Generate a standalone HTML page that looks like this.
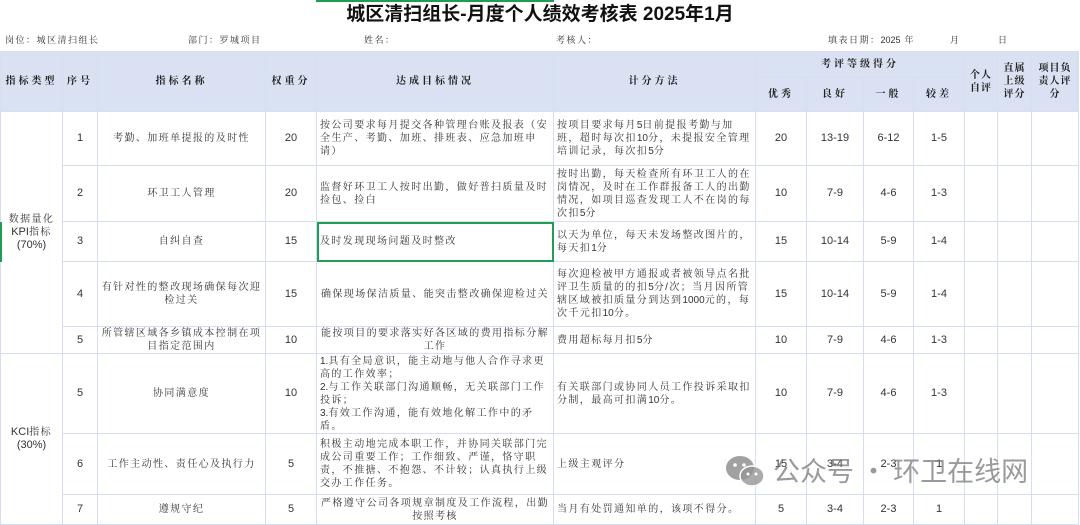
<!DOCTYPE html>
<html><head><meta charset="utf-8">
<style>
*{margin:0;padding:0;box-sizing:border-box}
body{width:1080px;height:516px;overflow:hidden;background:#fff;font-family:"Liberation Sans","Noto Serif CJK SC",serif;color:#222;position:relative}
.title{position:absolute;left:0;top:0;width:1080px;height:30px;text-align:center;font:bold 19px/30px "Liberation Sans","Noto Sans CJK SC",sans-serif;color:#111}
.info{position:absolute;top:30px;height:21px;font-size:9px;line-height:21px;color:#333;white-space:nowrap;letter-spacing:1.5px}
table{position:absolute;left:0;top:51px;border-collapse:collapse;table-layout:fixed;width:1078px}
td{border:1px solid #d5dff0;font-size:10px;line-height:13px;text-align:center;vertical-align:middle;overflow:hidden;padding:0 2px;letter-spacing:1.4px;color:#333}
.h td{background:#d9e1f2;font-weight:bold;font-size:10px;letter-spacing:3px;color:#222}
td.l{text-align:left;padding-left:3px;padding-right:1px}
.n{font-family:"Liberation Sans",sans-serif;font-size:11px;letter-spacing:0 !important}
i{font-style:normal;letter-spacing:0}
.sel{outline:2px solid #1f9d55;outline-offset:-2px}
.wm{position:absolute;left:773px;top:452px;font:27px/36px "Noto Sans CJK SC",sans-serif;color:rgba(120,120,120,.75);letter-spacing:0}
</style></head><body>
<div style="position:absolute;left:316px;top:0;width:238px;height:2px;background:#1f9d55"></div>
<div class="title">城区清扫组长-月度个人绩效考核表 2025年1月</div>
<div class="info" style="left:5px">岗位：城区清扫组长</div>
<div class="info" style="left:188px">部门：罗城项目</div>
<div class="info" style="left:364px">姓名：</div>
<div class="info" style="left:556px">考核人：</div>
<div class="info" style="left:828px">填表日期：<i>2025</i> 年</div>
<div class="info" style="left:950px">月</div>
<div class="info" style="left:998px">日</div>
<div style="position:absolute;left:0;top:51px;width:1078px;height:1px;background:#b4c6e7"></div>
<table>
<colgroup><col style="width:62px"><col style="width:35px"><col style="width:168px"><col style="width:51px"><col style="width:237px"><col style="width:202px"><col style="width:51px"><col style="width:57px"><col style="width:50px"><col style="width:51px"><col style="width:33px"><col style="width:34px"><col style="width:47px"></colgroup>
<tr class="h" style="height:26px"><td rowspan="2">指标类型</td><td rowspan="2">序号</td><td rowspan="2">指标名称</td><td rowspan="2">权重分</td><td rowspan="2">达成目标情况</td><td rowspan="2">计分方法</td><td colspan="4">考评等级得分</td><td rowspan="2" style="letter-spacing:1px">个人<br>自评</td><td rowspan="2" style="letter-spacing:1px">直属<br>上级<br>评分</td><td rowspan="2" style="letter-spacing:1px">项目负<br>责人评<br>分</td></tr>
<tr class="h" style="height:34px"><td>优秀</td><td>良好</td><td>一般</td><td>较差</td></tr>
<tr style="height:54px"><td rowspan="5">数据量化<br><span class="n">KPI</span>指标<br><span class="n">(70%)</span></td><td class="n">1</td><td>考勤、加班单提报的及时性</td><td class="n">20</td><td class="l">按公司要求每月提交各种管理台账及报表（安<br>全生产、考勤、加班、排班表、应急加班申<br>请）</td><td class="l">按项目要求每月<i>5</i>日前提报考勤与加班，超时每次扣<i>10</i>分，未提报安全管理培训记录，每次扣<i>5</i>分</td><td class="n">20</td><td class="n">13-19</td><td class="n">6-12</td><td class="n">1-5</td><td></td><td></td><td></td></tr>
<tr style="height:56px"><td class="n">2</td><td>环卫工人管理</td><td class="n">20</td><td class="l">监督好环卫工人按时出勤，做好普扫质量及时捡包、捡白</td><td class="l">按时出勤，每天检查所有环卫工人的在岗情况，及时在工作群报备工人的出勤情况，如项目巡查发现工人不在岗的每次扣<i>5</i>分</td><td class="n">10</td><td class="n">7-9</td><td class="n">4-6</td><td class="n">1-3</td><td></td><td></td><td></td></tr>
<tr style="height:40px"><td class="n">3</td><td>自纠自查</td><td class="n">15</td><td class="l sel">及时发现现场问题及时整改</td><td class="l">以天为单位，每天未发场整改图片的，每天扣<i>1</i>分</td><td class="n">15</td><td class="n">10-14</td><td class="n">5-9</td><td class="n">1-4</td><td></td><td></td><td></td></tr>
<tr style="height:65px"><td class="n">4</td><td>有针对性的整改现场确保每次迎检过关</td><td class="n">15</td><td>确保现场保洁质量、能突击整改确保迎检过关</td><td class="l">每次迎检被甲方通报或者被领导点名批评卫生质量的的扣<i>5</i>分/次；当月因所管辖区域被扣质量分到达到<i>1000</i>元的，每次千元扣<i>10</i>分。</td><td class="n">15</td><td class="n">10-14</td><td class="n">5-9</td><td class="n">1-4</td><td></td><td></td><td></td></tr>
<tr style="height:26px"><td class="n">5</td><td>所管辖区域各乡镇成本控制在项目指定范围内</td><td class="n">10</td><td>能按项目的要求落实好各区域的费用指标分解工作</td><td class="l">费用超标每月扣<i>5</i>分</td><td class="n">10</td><td class="n">7-9</td><td class="n">4-6</td><td class="n">1-3</td><td></td><td></td><td></td></tr>
<tr style="height:80px"><td rowspan="3"><span class="n">KCI</span>指标<br><span class="n">(30%)</span></td><td class="n">5</td><td>协同满意度</td><td class="n">10</td><td class="l"><i>1.</i>具有全局意识，能主动地与他人合作寻求更高的工作效率；<br><i>2.</i>与工作关联部门沟通顺畅，无关联部门工作投诉；<br><i>3.</i>有效工作沟通，能有效地化解工作中的矛盾。</td><td class="l">有关联部门或协同人员工作投诉采取扣分制，最高可扣满<i>10</i>分。</td><td class="n">10</td><td class="n">7-9</td><td class="n">4-6</td><td class="n">1-3</td><td></td><td></td><td></td></tr>
<tr style="height:61px"><td class="n">6</td><td>工作主动性、责任心及执行力</td><td class="n">5</td><td class="l">积极主动地完成本职工作，并协同关联部门完成公司重要工作；工作细致、严谨，恪守职责，不推搪、不抱怨、不计较；认真执行上级交办工作任务。</td><td class="l">上级主观评分</td><td class="n">15</td><td class="n">3-4</td><td class="n">2-3</td><td class="n">1</td><td></td><td></td><td></td></tr>
<tr style="height:30px"><td class="n">7</td><td>遵规守纪</td><td class="n">5</td><td>严格遵守公司各项规章制度及工作流程，出勤按照考核</td><td class="l">当月有处罚通知单的，该项不得分。</td><td class="n">5</td><td class="n">3-4</td><td class="n">2-3</td><td class="n">1</td><td></td><td></td><td></td></tr>
</table>
<div style="position:absolute;left:0;top:222px;width:2px;height:40px;background:#1f9d55"></div>
<svg style="position:absolute;left:725px;top:455px" width="42" height="34" viewBox="0 0 42 34"><ellipse cx="15" cy="13" rx="14" ry="12" fill="rgba(130,130,130,.75)"/><ellipse cx="27" cy="21" rx="12" ry="10" fill="rgba(150,150,150,.8)" stroke="#fff" stroke-width="1.5"/><circle cx="10" cy="10" r="1.8" fill="#fff"/><circle cx="19" cy="10" r="1.8" fill="#fff"/><circle cx="23" cy="19" r="1.5" fill="#fff"/><circle cx="31" cy="19" r="1.5" fill="#fff"/></svg>
<div class="wm">公众号 · 环卫在线网</div>
</body></html>
